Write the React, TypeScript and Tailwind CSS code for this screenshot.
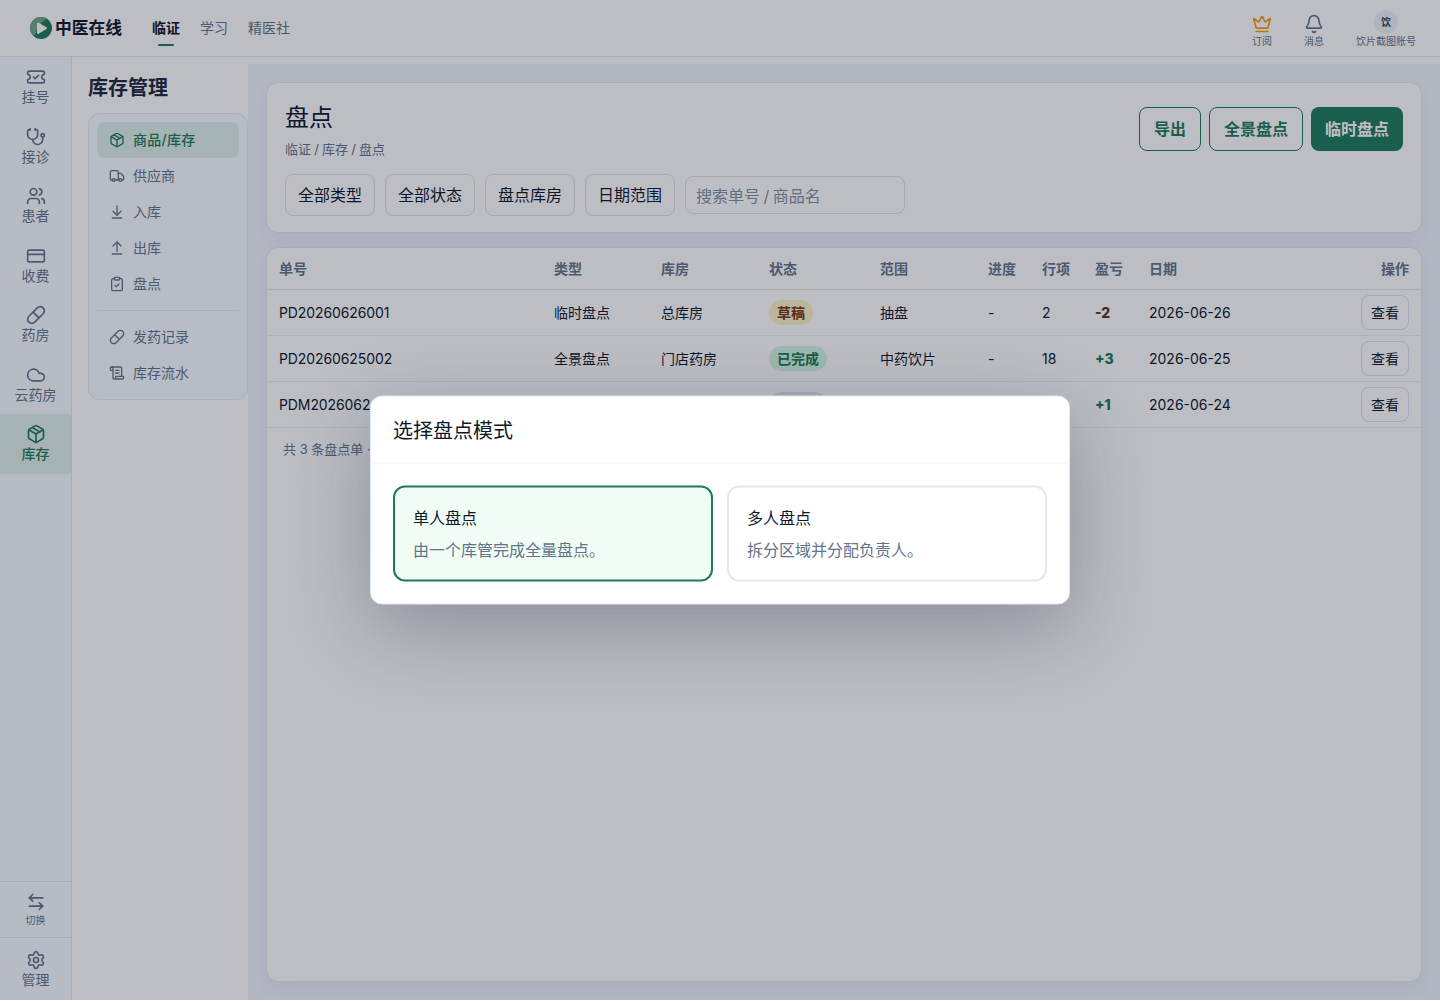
import React, { FC } from "react";
import {
  ArrowDownToLine,
  ArrowLeftRight,
  ArrowUpFromLine,
  Bell,
  ClipboardCheck,
  Cloud,
  CreditCard,
  Crown,
  LucideIcon,
  Package,
  Pill,
  ScrollText,
  Settings,
  Stethoscope,
  TicketCheck,
  Truck,
  Users,
} from "lucide-react";
import clsx from "clsx";

type NavItem = { label: string; icon: LucideIcon; active?: boolean };

const sideItems: NavItem[] = [
  { label: "挂号", icon: TicketCheck },
  { label: "接诊", icon: Stethoscope },
  { label: "患者", icon: Users },
  { label: "收费", icon: CreditCard },
  { label: "药房", icon: Pill },
  { label: "云药房", icon: Cloud },
  { label: "库存", icon: Package, active: true },
];

const stockItems: NavItem[] = [
  { label: "商品/库存", icon: Package, active: true },
  { label: "供应商", icon: Truck },
  { label: "入库", icon: ArrowDownToLine },
  { label: "出库", icon: ArrowUpFromLine },
  { label: "盘点", icon: ClipboardCheck },
];

const recordItems: NavItem[] = [
  { label: "发药记录", icon: Pill },
  { label: "库存流水", icon: ScrollText },
];

const filters = ["全部类型", "全部状态", "盘点库房", "日期范围"];

const columns = [
  { title: "单号", width: "w-[275px]" },
  { title: "类型", width: "w-[107px]" },
  { title: "库房", width: "w-[108px]" },
  { title: "状态", width: "w-[111px]" },
  { title: "范围", width: "w-[108px]" },
  { title: "进度", width: "w-[54px]" },
  { title: "行项", width: "w-[53px]" },
  { title: "盈亏", width: "w-[54px]" },
  { title: "日期", width: "w-[142px]" },
];

const rows = [
  {
    no: "PD20260626001",
    type: "临时盘点",
    store: "总库房",
    status: "草稿",
    statusClass: "bg-[#fef3c7] text-[#78350f]",
    scope: "抽盘",
    lines: "2",
    diff: "-2",
    diffClass: "text-[#5f3420]",
    date: "2026-06-26",
  },
  {
    no: "PD20260625002",
    type: "全景盘点",
    store: "门店药房",
    status: "已完成",
    statusClass: "bg-[#d6f5e5] text-[#1a7a55]",
    scope: "中药饮片",
    lines: "18",
    diff: "+3",
    diffClass: "text-[#1a7a55]",
    date: "2026-06-25",
  },
  {
    no: "PDM20260624003",
    type: "多人盘点",
    store: "总库房",
    status: "已取消",
    statusClass: "bg-[#e5e7eb] text-[#475569]",
    scope: "全部",
    lines: "36",
    diff: "+1",
    diffClass: "text-[#1a7a55]",
    date: "2026-06-24",
  },
];

const Logo: FC = () => (
  <svg width="22" height="22" viewBox="0 0 22 22">
    <circle cx="11" cy="11" r="11" fill="#1f7a5a" />
    <path d="M11 0A11 11 0 0 0 3.5 19C7 18.500 5 8 17 1.800A11 11 0 0 0 11 0Z" fill="#74a78c" />
    <g fill="#d9903c">
      <circle cx="7" cy="4" r=".6" />
      <circle cx="10.5" cy="3" r=".6" />
      <circle cx="5" cy="7.5" r=".6" />
      <circle cx="8" cy="6.3" r=".6" />
      <circle cx="3.5" cy="11" r=".6" />
    </g>
    <path d="M7 6.600c0-.9.8-1.300 1.600-.9l7.800 4.500c.8.5.8 1.300 0 1.800l-7.800 4.700c-.8.5-1.600.1-1.600-.8Z" fill="#fff" />
  </svg>
);

const TopBar: FC = () => (
  <header className="flex h-[57px] shrink-0 items-center justify-between border-b border-[#e5e7eb] bg-white pr-6 pl-[30px]">
    <div className="flex items-center">
      <Logo />
      <span className="ml-[3px] w-[68px] text-[16.8px] leading-6 font-bold">中医在线</span>
      <nav className="ml-[29px] flex h-[36px] gap-5 text-sm text-[#64748b]">
        <span className="flex flex-col items-center pt-2 font-bold text-[#0f172a]">
          临证
          <i className="mt-1.5 h-[2px] w-4 shrink-0 rounded bg-[#1f7a5a]" />
        </span>
        <span className="pt-2">学习</span>
        <span className="pt-2">精医社</span>
      </nav>
    </div>
    <div className="flex pt-[2px] text-[10px] leading-[14px] text-[#64748b]">
      <div className="flex w-[52px] flex-col items-center pt-1">
        <Crown size={20} color="#f59e0b" />
        <span>订阅</span>
      </div>
      <div className="flex w-[52px] flex-col items-center pt-1">
        <Bell size={20} />
        <span>消息</span>
      </div>
      <div className="ml-4 flex flex-col items-center">
        <span className="flex h-6 w-6 items-center justify-center rounded-full bg-[#eef2f9] font-bold text-[#334155]">
          饮
        </span>
        <span>饮片截图账号</span>
      </div>
    </div>
  </header>
);

const SideBar: FC = () => (
  <aside className="flex w-[72px] shrink-0 flex-col border-r border-[#e5e7eb] bg-[#f8fbff] text-sm text-[#64748b]">
    {sideItems.map(({ label, icon: Icon, active }) => (
      <div
        key={label}
        className={clsx(
          "flex h-[59.5px] shrink-0 flex-col items-center pt-[10px]",
          active && "bg-[#e0f0ea] font-medium text-[#1f7a5a]"
        )}
      >
        <Icon size={20} />
        <span className="leading-5">{label}</span>
      </div>
    ))}
    <div className="mt-auto flex h-14 shrink-0 flex-col items-center border-t border-[#e2e8f0] pt-[10px] text-[10px]">
      <ArrowLeftRight size={20} />
      <span className="leading-4">切换</span>
    </div>
    <div className="flex h-[63px] shrink-0 flex-col items-center border-t border-[#e2e8f0] pt-3">
      <Settings size={20} />
      <span className="leading-5">管理</span>
    </div>
  </aside>
);

const MenuRow: FC<{ item: NavItem }> = ({ item }) => {
  const Icon = item.icon;
  return (
    <div
      className={clsx(
        "flex h-9 items-center gap-2 rounded-lg px-3 text-sm",
        item.active ? "bg-[#e0f0ea] font-medium tracking-[0.3px] text-[#1f7a5a]" : "text-[#64748b]"
      )}
    >
      <Icon size={16} />
      {item.label}
    </div>
  );
};

const StockMenu: FC = () => (
  <section className="w-[176px] shrink-0 bg-white pl-4">
    <h2 className="mt-[17px] text-xl leading-7 font-bold text-[#1e293b]">库存管理</h2>
    <div className="mt-[11px] rounded-xl border border-[#e6ebf4] bg-[#fafcff] p-2">
      {stockItems.map((item) => (
        <MenuRow key={item.label} item={item} />
      ))}
      <div className="my-2 h-px bg-[#e8ecf3]" />
      {recordItems.map((item) => (
        <MenuRow key={item.label} item={item} />
      ))}
    </div>
  </section>
);

const FilterCard: FC = () => (
  <div className="h-[151px] shrink-0 rounded-xl border border-[#dfe6f1] bg-white px-[18px] pt-4 shadow-[0_8px_24px_rgba(30,41,99,0.06)]">
    <div className="flex h-[60px] items-center justify-between">
      <div>
        <h1 className="text-2xl leading-[38px]">盘点</h1>
        <p className="mt-0.5 text-[13px] leading-5 [word-spacing:-0.5px] text-[#64748b]">
          临证 / 库存 / 盘点
        </p>
      </div>
      <div className="flex gap-2 text-base font-bold text-[#1f7a5a]">
        <button className="h-11 w-[62px] rounded-lg border border-[#1f7a5a]">导出</button>
        <button className="h-11 w-[94px] rounded-lg border border-[#1f7a5a]">全景盘点</button>
        <button className="h-11 w-[92px] rounded-lg bg-[#1f7a5a] text-white">临时盘点</button>
      </div>
    </div>
    <div className="mt-[15px] flex items-center gap-[10px]">
      {filters.map((label) => (
        <button key={label} className="h-[42px] w-[90px] rounded-lg border border-[#dfe2e8]">
          {label}
        </button>
      ))}
      <input
        className="h-[38px] w-[220px] rounded-lg border border-[#dfe2e8] px-[10px] pt-[2px] [word-spacing:-1px] placeholder:text-[#8490a3]"
        placeholder="搜索单号 / 商品名"
      />
    </div>
  </div>
);

const CountTable: FC = () => (
  <div className="flex-1 overflow-hidden rounded-xl border border-[#dfe6f1] bg-white shadow-[0_8px_24px_rgba(30,41,99,0.06)]">
    <table className="w-full table-fixed border-separate border-spacing-0 text-left text-sm [&_td]:border-b [&_td]:border-[#eaedf1] [&_th]:border-b [&_th]:border-[#e2e6ea]">
      <thead>
        <tr className="h-[42px] text-[#64748b]">
          {columns.map((col) => (
            <th key={col.title} className={clsx("px-3 font-bold", col.width)}>
              {col.title}
            </th>
          ))}
          <th className="px-3 text-right font-bold">操作</th>
        </tr>
      </thead>
      <tbody>
        {rows.map((row) => (
          <tr key={row.no} className="h-[46px] whitespace-nowrap">
            <td className="px-3 tracking-[-0.1px]">{row.no}</td>
            <td className="px-3">{row.type}</td>
            <td className="px-3">{row.store}</td>
            <td className="px-3">
              <span
                className={clsx(
                  "inline-flex h-[25px] items-center rounded-full px-2 align-middle font-bold",
                  row.statusClass
                )}
              >
                {row.status}
              </span>
            </td>
            <td className="px-3">{row.scope}</td>
            <td className="px-3">-</td>
            <td className="px-3">{row.lines}</td>
            <td className={clsx("px-3 font-extrabold", row.diffClass)}>{row.diff}</td>
            <td className="px-3">{row.date}</td>
            <td className="px-3 text-right">
              <button className="h-[35px] w-12 rounded-lg border border-[#dfe2e8] align-middle">
                查看
              </button>
            </td>
          </tr>
        ))}
      </tbody>
    </table>
    <p className="px-4 pt-[11px] text-[13px] leading-5 text-[#64748b]">共 3 条盘点单 · 第 1 / 1 页</p>
  </div>
);

const ModeDialog: FC = () => (
  <div className="absolute inset-x-0 top-0 h-[1000px] bg-[rgba(15,23,42,0.28)]">
    <div className="absolute top-1/2 left-1/2 w-[700px] [transform:translate(-50%,-50%)] rounded-xl border border-[#e2e8f0] bg-white shadow-[0_24px_80px_rgba(15,23,42,0.28)]">
      <div className="flex h-[67px] items-center border-b border-[#eef1f5] px-[22px] pt-px text-xl">
        选择盘点模式
      </div>
      <div className="flex gap-[14px] p-[22px]">
        <div className="h-24 flex-1 rounded-xl border-2 border-[#1f7a5a] bg-[#f0fdf4] p-[18px]">
          <p className="leading-6">单人盘点</p>
          <p className="mt-2 leading-6 text-[#64748b]">由一个库管完成全量盘点。</p>
        </div>
        <div className="h-24 flex-1 rounded-xl border-2 border-[#e5e7eb] p-[18px]">
          <p className="leading-6">多人盘点</p>
          <p className="mt-2 leading-6 text-[#64748b]">拆分区域并分配负责人。</p>
        </div>
      </div>
    </div>
  </div>
);

export default function App() {
  return (
    <div
      lang="zh-CN"
      className="relative flex h-[1000px] w-full flex-col bg-white font-[Inter,'Noto_Sans_CJK_SC',sans-serif] text-[#0f172a]"
    >
      <TopBar />
      <div className="flex min-h-0 flex-1">
        <SideBar />
        <StockMenu />
        <main className="mt-[7px] flex min-w-0 flex-1 flex-col gap-[14px] overflow-hidden bg-[#f3f6fd] p-[18px]">
          <FilterCard />
          <CountTable />
        </main>
      </div>
      <ModeDialog />
    </div>
  );
}
